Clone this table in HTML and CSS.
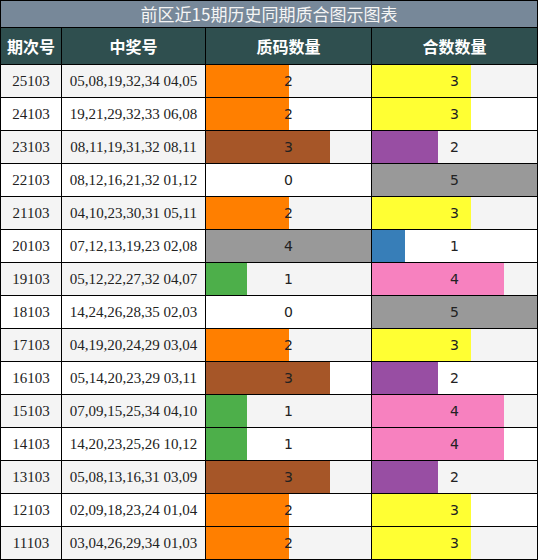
FILE: index.html
```html
<!DOCTYPE html>
<html lang="zh">
<head>
<meta charset="utf-8">
<link rel="stylesheet" href="styles.css">
</head>
<body>
<div class="chart">
  <div class="title">前区近15期历史同期质合图示图表</div>
  <div class="head">期次号</div>
  <div class="head">中奖号</div>
  <div class="head">质码数量</div>
  <div class="head">合数数量</div>

  <div class="cell odd">25103</div><div class="cell odd">05,08,19,32,34 04,05</div>
  <div class="bar-cell odd"><div class="bar orange" style="width:50%"></div><span class="num">2</span></div>
  <div class="bar-cell odd"><div class="bar yellow" style="width:60%"></div><span class="num">3</span></div>

  <div class="cell">24103</div><div class="cell">19,21,29,32,33 06,08</div>
  <div class="bar-cell"><div class="bar orange" style="width:50%"></div><span class="num">2</span></div>
  <div class="bar-cell"><div class="bar yellow" style="width:60%"></div><span class="num">3</span></div>

  <div class="cell odd">23103</div><div class="cell odd">08,11,19,31,32 08,11</div>
  <div class="bar-cell odd"><div class="bar brown" style="width:75%"></div><span class="num">3</span></div>
  <div class="bar-cell odd"><div class="bar purple" style="width:40%"></div><span class="num">2</span></div>

  <div class="cell">22103</div><div class="cell">08,12,16,21,32 01,12</div>
  <div class="bar-cell"><div class="bar" style="width:0%"></div><span class="num">0</span></div>
  <div class="bar-cell"><div class="bar gray" style="width:100%"></div><span class="num">5</span></div>

  <div class="cell odd">21103</div><div class="cell odd">04,10,23,30,31 05,11</div>
  <div class="bar-cell odd"><div class="bar orange" style="width:50%"></div><span class="num">2</span></div>
  <div class="bar-cell odd"><div class="bar yellow" style="width:60%"></div><span class="num">3</span></div>

  <div class="cell">20103</div><div class="cell">07,12,13,19,23 02,08</div>
  <div class="bar-cell"><div class="bar gray" style="width:100%"></div><span class="num">4</span></div>
  <div class="bar-cell"><div class="bar blue" style="width:20%"></div><span class="num">1</span></div>

  <div class="cell odd">19103</div><div class="cell odd">05,12,22,27,32 04,07</div>
  <div class="bar-cell odd"><div class="bar green" style="width:25%"></div><span class="num">1</span></div>
  <div class="bar-cell odd"><div class="bar pink" style="width:80%"></div><span class="num">4</span></div>

  <div class="cell">18103</div><div class="cell">14,24,26,28,35 02,03</div>
  <div class="bar-cell"><div class="bar" style="width:0%"></div><span class="num">0</span></div>
  <div class="bar-cell"><div class="bar gray" style="width:100%"></div><span class="num">5</span></div>

  <div class="cell odd">17103</div><div class="cell odd">04,19,20,24,29 03,04</div>
  <div class="bar-cell odd"><div class="bar orange" style="width:50%"></div><span class="num">2</span></div>
  <div class="bar-cell odd"><div class="bar yellow" style="width:60%"></div><span class="num">3</span></div>

  <div class="cell">16103</div><div class="cell">05,14,20,23,29 03,11</div>
  <div class="bar-cell"><div class="bar brown" style="width:75%"></div><span class="num">3</span></div>
  <div class="bar-cell"><div class="bar purple" style="width:40%"></div><span class="num">2</span></div>

  <div class="cell odd">15103</div><div class="cell odd">07,09,15,25,34 04,10</div>
  <div class="bar-cell odd"><div class="bar green" style="width:25%"></div><span class="num">1</span></div>
  <div class="bar-cell odd"><div class="bar pink" style="width:80%"></div><span class="num">4</span></div>

  <div class="cell">14103</div><div class="cell">14,20,23,25,26 10,12</div>
  <div class="bar-cell"><div class="bar green" style="width:25%"></div><span class="num">1</span></div>
  <div class="bar-cell"><div class="bar pink" style="width:80%"></div><span class="num">4</span></div>

  <div class="cell odd">13103</div><div class="cell odd">05,08,13,16,31 03,09</div>
  <div class="bar-cell odd"><div class="bar brown" style="width:75%"></div><span class="num">3</span></div>
  <div class="bar-cell odd"><div class="bar purple" style="width:40%"></div><span class="num">2</span></div>

  <div class="cell">12103</div><div class="cell">02,09,18,23,24 01,04</div>
  <div class="bar-cell"><div class="bar orange" style="width:50%"></div><span class="num">2</span></div>
  <div class="bar-cell"><div class="bar yellow" style="width:60%"></div><span class="num">3</span></div>

  <div class="cell odd">11103</div><div class="cell odd">03,04,26,29,34 01,03</div>
  <div class="bar-cell odd"><div class="bar orange" style="width:50%"></div><span class="num">2</span></div>
  <div class="bar-cell odd"><div class="bar yellow" style="width:60%"></div><span class="num">3</span></div>
</div>
</body>
</html>
```

FILE: styles.css
```css
html, body {
  margin: 0;
  padding: 0;
  background: #fff;
}

.chart {
  width: 538px;
  height: 560px;
  box-sizing: border-box;
  display: grid;
  grid-template-columns: 60px 143px 165px 165px;
  grid-template-rows: 26px 36px repeat(15, 32px);
  gap: 1px;
  padding: 1px;
  background: #000;
}

.title {
  grid-column: 1 / -1;
  background: #778899;
  color: #f4f4f4;
  font-family: "Noto Sans CJK SC", "Noto Sans", sans-serif;
  font-size: 17px;
  line-height: 26px;
  text-align: center;
}

.head {
  background: #2f4f4f;
  color: #fff;
  font-family: "Noto Sans CJK SC", "Noto Sans", sans-serif;
  font-weight: bold;
  font-size: 16px;
  display: flex;
  align-items: center;
  justify-content: center;
}

.cell {
  background: #fff;
  color: #222;
  font-family: "Liberation Serif", "Times New Roman", serif;
  font-size: 15px;
  display: flex;
  align-items: center;
  justify-content: center;
}

.bar-cell {
  background: #fff;
  display: grid;
  grid-template: 1fr / 1fr;
}

.odd {
  background: #f4f4f4;
}

.bar {
  grid-area: 1 / 1;
  justify-self: start;
  height: 100%;
}

.num {
  grid-area: 1 / 1;
  place-self: center;
  font-family: "DejaVu Sans", sans-serif;
  font-size: 14px;
  color: #222;
}

.orange { background: #ff7f00; }
.yellow { background: #ffff33; }
.brown  { background: #a65628; }
.purple { background: #984ea3; }
.gray   { background: #999999; }
.green  { background: #4daf4a; }
.blue   { background: #377eb8; }
.pink   { background: #f781bf; }
```
